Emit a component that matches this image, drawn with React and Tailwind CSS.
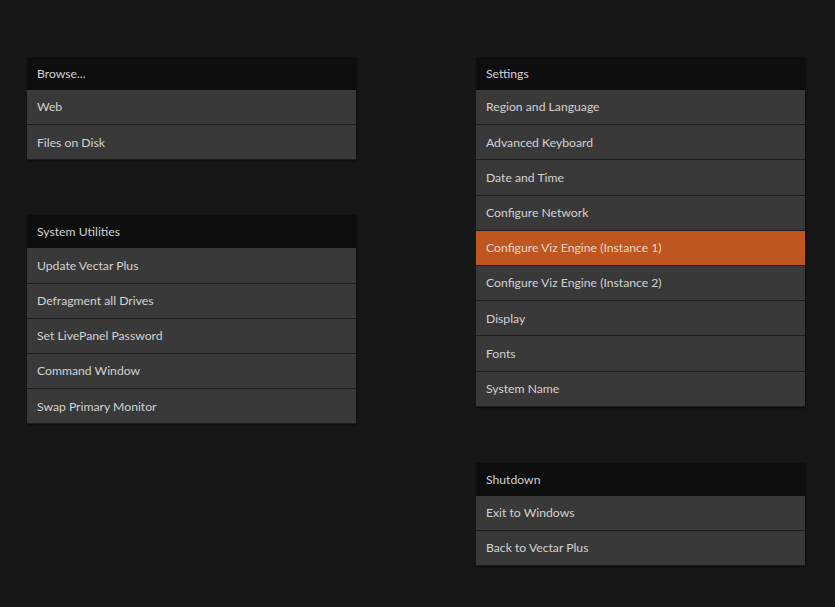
const groups = {
  left: [
    { title: 'Browse...', items: ['Web', 'Files on Disk'] },
    { title: 'System Utilities', items: ['Update Vectar Plus', 'Defragment all Drives', 'Set LivePanel Password', 'Command Window', 'Swap Primary Monitor'] },
  ],
  right: [
    { title: 'Settings', items: ['Region and Language', 'Advanced Keyboard', 'Date and Time', 'Configure Network', 'Configure Viz Engine (Instance 1)', 'Configure Viz Engine (Instance 2)', 'Display', 'Fonts', 'System Name'] },
    { title: 'Shutdown', items: ['Exit to Windows', 'Back to Vectar Plus'] },
  ],
}

const activeItem = 'Configure Viz Engine (Instance 1)'

function Menu({ title, items }) {
  return <section className="w-[329px] shadow-[1px_1px_2px_rgba(0,0,0,0.5)]">
    <div className="flex h-[33px] items-center bg-[#0e0e0e] px-[10px] pt-px text-[12.2px] text-[#d2d2d2]">{title}</div>
    {items.map((item) => <button key={item} type="button" className={`flex h-[35.2px] w-full items-center border-b border-[#1d1d1d] px-[10px] pt-px text-left text-[12.2px] text-[#d2d2d2] ${item === activeItem ? 'bg-[#c0561f] text-[#ecd6c8]' : 'bg-[#393939]'}`}>{item}</button>)}
  </section>
}

export default function App() {
  return <div className="flex h-[607px] w-[835px] gap-[120px] overflow-hidden bg-[#171717] pl-[27px] pt-[57px]" style={{ fontFamily: 'Lato, "Open Sans", sans-serif' }}>
    <div className="flex flex-col gap-[55px]">
      {groups.left.map((group) => <Menu key={group.title} {...group} />)}
    </div>
    <div className="flex flex-col gap-[56px]">
      {groups.right.map((group) => <Menu key={group.title} {...group} />)}
    </div>
  </div>
}
